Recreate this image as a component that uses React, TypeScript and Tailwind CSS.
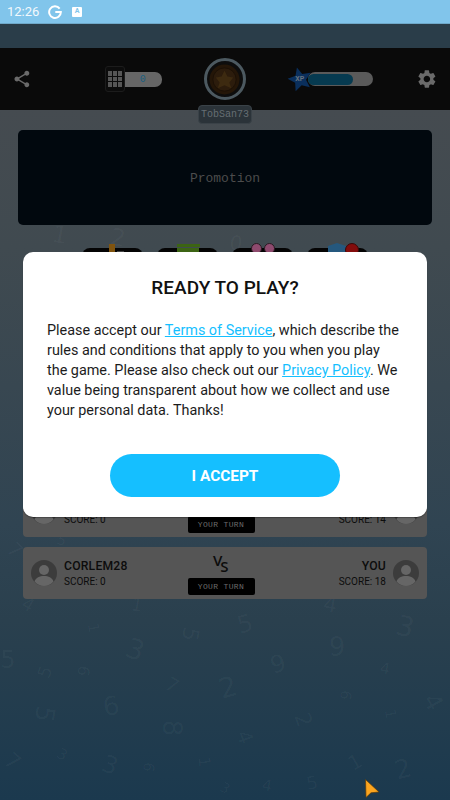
import React from 'react';
import { MdShare, MdSettings } from 'react-icons/md';

// faint digits scattered over the background: [digit, x, y, size, rotation]
const bgDigits: [string, number, number, number, number][] = [
  ['1', 93, 628, 15, 80],
  ['5', 190, 634, 22, 100],
  ['5', 245, 624, 24, -15],
  ['3', 135, 650, 28, 20],
  ['6', 337, 645, 26, 180],
  ['3', 405, 627, 28, 15],
  ['5', 45, 672, 18, -70],
  ['6', 83, 671, 16, 100],
  ['5', 8, 660, 24, 0],
  ['7', 172, 685, 20, 30],
  ['9', 278, 664, 24, -15],
  ['2', 228, 688, 28, -15],
  ['4', 385, 669, 16, 10],
  ['6', 345, 695, 15, 100],
  ['1', 390, 714, 15, 80],
  ['4', 433, 702, 24, 60],
  ['5', 45, 714, 26, 100],
  ['6', 111, 706, 26, -10],
  ['8', 172, 728, 26, 90],
  ['2', 303, 720, 22, 70],
  ['4', 245, 737, 20, 70],
  ['3', 62, 755, 15, 30],
  ['3', 110, 765, 24, 20],
  ['6', 148, 767, 15, 100],
  ['1', 204, 762, 16, 85],
  ['7', 12, 762, 22, 40],
  ['1', 355, 762, 20, -30],
  ['2', 403, 769, 26, -15],
  ['5', 312, 783, 18, -10],
  ['4', 267, 786, 16, 10],
  ['3', 225, 788, 14, 30],
  ['4', 28, 605, 18, 30],
  ['1', 137, 605, 18, 10],
  ['4', 330, 605, 22, 10],
  ['7', 15, 550, 20, 45],
  ['5', 62, 540, 14, 20],
  ['1', 60, 235, 24, 10],
  ['2', 118, 238, 24, 10],
  ['0', 236, 243, 20, 10],
  ['8', 425, 143, 20, 10],
];

const Avatar = () => (
  <svg viewBox="0 0 26 26" className="h-[26px] w-[26px] shrink-0">
    <circle cx="13" cy="13" r="13" fill="#3c3c3c" />
    <circle cx="13" cy="10" r="5" fill="#666666" />
    <path d="M3.5 21.5c1.5-4 5-5.5 9.5-5.5s8 1.5 9.5 5.5A13 13 0 0 1 13 26a13 13 0 0 1-9.5-4.5z" fill="#666666" />
  </svg>
);

const MatchRow = ({ name, left, right }: { name: string; left: string; right: string }) => (
  <div className="flex h-[52px] items-center justify-between rounded-[4px] bg-[#555555] px-2 font-['Roboto',sans-serif] text-[#0c0c0c]">
    <div className="flex w-[146px] items-center gap-[7px]">
      <Avatar />
      <div>
        <div className="text-[12.2px] leading-[17px] font-medium tracking-[0.2px]">{name}</div>
        <div className="text-[10px] leading-[14px]">{left}</div>
      </div>
    </div>
    <div className="flex flex-col items-center pt-[2px]">
      <div className="flex h-[23px] w-[16px] font-['Open_Sans',sans-serif] text-[15px] leading-none font-semibold">
        <span>V</span>
        <span className="mt-[6px] -ml-[2px]">S</span>
      </div>
      <div className="mt-[2px] flex h-[17px] w-[67px] items-center justify-center rounded-[2px] bg-black font-['Liberation_Mono',monospace] text-[8px] tracking-[0.35px] text-[#6c6c6c]">
        YOUR TURN
      </div>
    </div>
    <div className="flex w-[154px] items-center justify-end gap-[7px] text-right">
      <div>
        <div className="text-[12.2px] leading-[17px] font-medium tracking-[0.2px]">YOU</div>
        <div className="text-[10px] leading-[14px]">{right}</div>
      </div>
      <Avatar />
    </div>
  </div>
);

const App: React.FC = () => {
  return (
    <div className="relative flex h-[800px] w-[450px] flex-col overflow-hidden bg-[#1b394e]">
      {/* status bar */}
      <div className="flex h-[24px] shrink-0 items-center border-b border-[#6fa9c9] bg-[#81c5eb] pl-[7px] font-['Roboto',sans-serif] text-[13px] text-white">
        <span className="w-[41px] opacity-90">12:26</span>
        <svg viewBox="0 0 24 24" className="h-[14px] w-[14px]" fill="none" stroke="white" strokeWidth="3.4">
          <path d="M20 6.2A10 10 0 1 0 22 12H12.5" />
        </svg>
        <div className="ml-[10px] flex h-[10px] w-[10px] items-center justify-center rounded-[1px] bg-white text-[7px] leading-none font-bold text-[#81c5eb]">
          A
        </div>
      </div>

      <div className="h-[24px] shrink-0 bg-[#2a3d49]" />

      {/* top bar */}
      <div className="relative z-10 flex h-[62px] shrink-0 items-center bg-[#0a0a0a] pl-[12px] pr-[12px]">
        <MdShare className="h-[20px] w-[20px] text-[#6a6a6a]" />
        <div className="ml-[73px] flex w-[58px] items-center">
          <div className="z-10 grid h-[26px] w-[20px] grid-cols-3 content-center gap-[1px] rounded-[3px] border border-[#1c1c1c] bg-[#0c0c0c] px-[2px]">
            {Array.from({ length: 9 }, (_, i) => (
              <div key={i} className="h-[4.5px] bg-[#565656]" />
            ))}
          </div>
          <div className="-ml-[1px] flex h-[15px] w-[38px] items-center justify-center rounded-r-[7px] bg-[#666666] font-['Liberation_Mono',monospace] text-[10px] text-[#195f80]">
            0
          </div>
        </div>
        <div className="ml-[42px] flex h-[42px] w-[42px] items-center justify-center rounded-full border-[3px] border-[#4c5960] bg-[#0d0d0d]">
          <svg viewBox="0 0 32 32" className="h-[31px] w-[31px]">
            <circle cx="16" cy="16" r="15.5" fill="#241608" />
            <circle cx="16" cy="16" r="12" fill="#2c1c0c" stroke="#1c1106" strokeWidth="1" />
            <path d="M16 7l3 6 6 1-4 5 2 6-7-3-7 3 2-6-4-5 6-1z" fill="#3d2a10" />
          </svg>
        </div>
        <div className="relative ml-[62px] flex h-[14px] w-[66px] items-center rounded-full bg-[#5a5a5a] py-[2px] pr-[20px]">
          <div className="h-[11px] w-full rounded-full bg-[#063a50]" />
          {/* xp star sits on the bar's left end */}
          <div className="absolute -left-[21px] -top-[6px] flex h-[26px] w-[26px] items-center justify-center">
            <svg viewBox="0 0 24 24" className="absolute h-[26px] w-[26px]">
              <path d="M12 1l3.2 7 7.8.9-5.8 5.2 1.6 7.7L12 18l-6.8 3.8 1.6-7.7L1 8.9 8.8 8z" fill="#0a2f5c" transform="rotate(-15 12 12)" />
            </svg>
            <span className="relative font-['Roboto',sans-serif] text-[7px] font-bold text-[#65727f]">XP</span>
          </div>
        </div>
        <MdSettings className="ml-[43px] h-[22px] w-[22px] text-[#6a6a6a]" />
        <div className="absolute left-[198px] top-[57px] flex h-[19px] w-[54px] items-center justify-center rounded-[4px] border border-[#3a4248] bg-[#2b3339] font-['Liberation_Mono',monospace] text-[10px] text-[#666e73]">
          TobSan73
        </div>
      </div>

      {/* page under the dialog */}
      <div className="relative flex flex-1 flex-col bg-[linear-gradient(180deg,#454b50_0%,#404a50_20%,#304452_60%,#2a404e_74%,#1b394e_100%)] px-[18px] pt-[20px]">
        {bgDigits.map(([digit, x, y, size, rot], i) => (
          <span
            key={i}
            className="absolute font-['DejaVu_Sans',sans-serif] leading-none text-[#ffffff0a]"
            style={{ left: x, top: y - 110, fontSize: size, transform: `translate(-50%, -50%) rotate(${rot}deg)` }}
          >
            {digit}
          </span>
        ))}

        <div className="relative flex h-[95px] shrink-0 items-center justify-center rounded-[5px] bg-[#01080e] pt-[2px] font-['Liberation_Mono',monospace] text-[13px] text-[#4c4c4c]">
          Promotion
        </div>

        <div className="relative mt-[23px] flex h-[60px] justify-center gap-[14px]">
          <div className="relative h-[60px] w-[61px] rounded-[8px] bg-[#040404]">
            <div className="absolute -top-[4px] left-[27px] h-[8px] w-[6px] bg-[#80540f]" />
            <div className="absolute left-[35px] top-[3px] h-[1px] w-[7px] bg-[#444]" />
          </div>
          <div className="relative h-[60px] w-[61px] rounded-[8px] bg-[#040404]">
            <div className="absolute -top-[4px] left-[20px] h-[3px] w-[23px] bg-[#3c6414]" />
            <div className="absolute left-[20px] top-0 h-[4px] w-[22px] bg-[#3c6414]" />
          </div>
          <div className="relative h-[60px] w-[61px] rounded-[8px] bg-[#040404]">
            <div className="absolute -top-[5px] left-[19px] h-[11px] w-[11px] rounded-full border border-[#2a1a22] bg-[#8e4a6e]" />
            <div className="absolute -top-[5px] left-[32px] h-[11px] w-[11px] rounded-full border border-[#2a1a22] bg-[#8e4a6e]" />
          </div>
          <div className="relative h-[60px] w-[61px] rounded-[8px] bg-[#040404]">
            <svg viewBox="0 0 18 10" className="absolute -top-[5px] left-[21px] h-[10px] w-[18px]">
              <path d="M0 3L9 0l9 3v7H0z" fill="#25587e" />
            </svg>
            <div className="absolute -top-[5px] left-[38px] h-[14px] w-[14px] rounded-full border border-[#3a0808] bg-[#840c0c]" />
          </div>
        </div>

        <div className="relative mt-[177px] flex flex-col gap-[10px] px-[5px]">
          <MatchRow name="HUSKER" left="SCORE: 0" right="SCORE: 14" />
          <MatchRow name="CORLEM28" left="SCORE: 0" right="SCORE: 18" />
        </div>
      </div>

      {/* terms dialog */}
      <div className="absolute left-[23px] top-[252px] z-20 flex h-[265px] w-[404px] flex-col items-center rounded-[10px] bg-white font-['Roboto',sans-serif] shadow-[0_1px_1px_rgba(0,0,0,0.3)]">
        <h2 className="mt-[24px] text-[19px] leading-[23px] font-medium text-[#111]">READY TO PLAY?</h2>
        <p className="mt-[22px] w-[356px] text-[14.4px] leading-[20px] text-[#1c1c1c]">
          Please accept our <span className="text-[#15bfff] underline">Terms of Service</span>, which describe the rules
          and conditions that apply to you when you play the game. Please also check out our{' '}
          <span className="text-[#15bfff] underline">Privacy Policy</span>. We value being transparent about how we
          collect and use your personal data. Thanks!
        </p>
        <button className="mt-[33px] flex h-[43px] w-[230px] items-center justify-center rounded-full bg-[#15bfff] pt-[2px] text-[15.4px] font-bold text-white">
          I ACCEPT
        </button>
      </div>

      {/* pointer */}
      <svg viewBox="0 0 15 19" className="absolute left-[365px] top-[779px] z-30 h-[19px] w-[15px]">
        <path d="M0.5 0.5L14 13l-8 .8L1 18.5z" fill="#fba51f" stroke="#5a3a08" strokeWidth="0.7" />
      </svg>
    </div>
  );
};

export default App;
